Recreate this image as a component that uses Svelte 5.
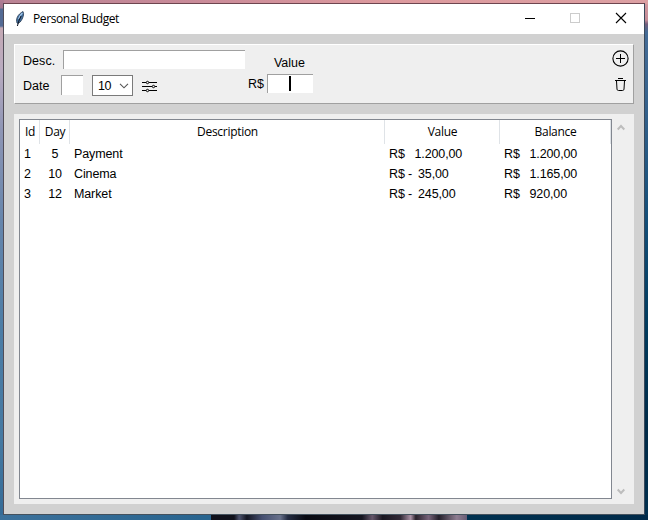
<script>
  const columns = ['Id', 'Day', 'Description', 'Value', 'Balance'];
  const rows = [
    { id: 1, day: 5, desc: 'Payment', sign: '', value: '1.200,00', balance: '1.200,00' },
    { id: 2, day: 10, desc: 'Cinema', sign: '-', value: '35,00', balance: '1.165,00' },
    { id: 3, day: 12, desc: 'Market', sign: '-', value: '245,00', balance: '920,00' }
  ];
</script>

<div class="desktop">
  <div class="wall top"></div>
  <div class="wall left"></div>
  <div class="wall bottom"></div>
  <div class="window">
    <header>
      <svg class="feather" width="12" height="18" viewBox="0 0 12 18">
        <path d="M3 13 C1.6 9 3.5 4.5 9 1.5 C10.4 4 9 8.5 6.2 12 L4 13.4Z" fill="#45719f" stroke="#26374f" stroke-width=".8" />
        <path d="M4.6 9 Q5.8 5.4 8.4 3" fill="none" stroke="#a9cdf0" stroke-width="1.2" />
        <path d="M7.1 6 Q4.7 10 3.4 16" fill="none" stroke="#111827" stroke-width="1.1" />
      </svg>
      <span class="title">Personal Budget</span>
      <svg class="controls" width="120" height="30" viewBox="0 0 120 30" fill="none" shape-rendering="crispEdges">
        <path d="M1 14.5H11" stroke="#000" />
        <rect x="46.5" y="9.5" width="9" height="9" stroke="#ccc" />
        <path d="M92 9L102 19M102 9L92 19" stroke="#000" stroke-width="1.1" shape-rendering="auto" />
      </svg>
    </header>
    <main>
      <section class="form">
        <div class="fields">
          <div class="line first"><span class="label">Desc.</span><div class="entry desc"></div></div>
          <div class="line">
            <span class="label date">Date</span>
            <div class="entry day"></div>
            <div class="combo"><span>10</span>
              <svg width="10" height="6" viewBox="0 0 10 6"><path d="M1 .8L5 4.8L9 .8" fill="none" stroke="#555" stroke-width="1.1" /></svg>
            </div>
            <svg class="sliders" width="16" height="13" viewBox="0 0 16 13" fill="none" stroke="#000">
              <path d="M0 2.5H4M7 2.5H15M0 6.5H10M13 6.5H15M0 10.5H4M7 10.5H15" shape-rendering="crispEdges" />
              <circle cx="5.5" cy="2.5" r="1.2" /><circle cx="11.5" cy="6.5" r="1.2" /><circle cx="5.5" cy="10.5" r="1.2" />
            </svg>
          </div>
        </div>
        <div class="amount">
          <span class="vlabel">Value</span>
          <div class="money"><span>R$</span><div class="entry val"><i></i></div></div>
        </div>
        <div class="actions">
          <svg width="18" height="18" viewBox="0 0 18 18" fill="none" stroke="#000">
            <circle cx="8.5" cy="8.5" r="7.6" stroke-width="1.1" /><path d="M4 8.5H13M8.5 4V13" shape-rendering="crispEdges" />
          </svg>
          <svg width="18" height="14" viewBox="0 0 18 14" fill="none" stroke="#000">
            <path d="M6 .5H11M3 2.5H14" shape-rendering="crispEdges" />
            <path d="M4.5 3L5 11.2Q5.2 12.5 6.5 12.5H10.5Q11.8 12.5 12 11.2L12.5 3" />
          </svg>
        </div>
      </section>
      <section class="list">
        <div class="tree">
          <div class="grid head">
            {#each columns as c}<div>{c}</div>{/each}
          </div>
          {#each rows as r}
            <div class="grid row">
              <div>{r.id}</div>
              <div class="num">{r.day}</div>
              <div>{r.desc}</div>
              <div class="cash"><span class="cur">R$</span><span class="sign">{r.sign}</span><span class:neg={r.sign}>{r.value}</span></div>
              <div class="cash"><span class="cur">R$</span><span class="sign"></span><span>{r.balance}</span></div>
            </div>
          {/each}
        </div>
        <div class="scroll">
          <svg width="8" height="7" viewBox="0 0 8 7"><path d="M.7 5.5L4 2L7.3 5.5" fill="none" stroke="#bdbdbd" stroke-width="2" /></svg>
          <svg width="8" height="7" viewBox="0 0 8 7"><path d="M.7 1.5L4 5L7.3 1.5" fill="none" stroke="#bdbdbd" stroke-width="2" /></svg>
        </div>
      </section>
    </main>
  </div>
  <div class="rock"></div>
</div>

<style>
  :global(body) { margin: 0; overflow: hidden; }
  * { box-sizing: border-box; }
  svg { display: block; flex: none; }
  .desktop {
    position: relative; width: 648px; height: 520px; padding: 3px;
    font: 12.5px/20px "Liberation Sans", Arial, sans-serif; color: #000; white-space: nowrap;
    background: linear-gradient(#d49aa0 0, #c58d98 20px, #755e7c 24px, #456c96 32px, #34618b 110px, #134e78 220px, #003a5c 330px, #002a47 430px, #002f4e 520px);
  }
  .wall { position: absolute; left: 0; top: 0; }
  .wall.top { width: 648px; height: 4px; background: linear-gradient(90deg, #b98394, #c98b99 30%, #dd9a9e 60%, #dca0a3); }
  .wall.left { width: 4px; height: 520px; background: linear-gradient(#b17d94 0, #a1748e 8px, #536a94 9px, #536a94 26px, #c4a9b4 28px, #b9abc0 70px, #8e95b5 130px, #6685ac 220px, #4c7da6 330px, #4579a2 440px, #336a96 520px); }
  .wall.bottom { top: 515px; width: 648px; height: 5px; background: linear-gradient(90deg, #3c719b, #28648f 200px, #28648f 210px, #003150 470px, #002a49); }
  .window { position: relative; width: 642px; height: 512px; border: 1px solid; border-color: #6e454f #39485a #44515d #514d58; background: #d1d1d1; }
  header { display: flex; align-items: flex-start; height: 30px; background: #fff; }
  .feather { margin: 6px 0 0 10px; }
  .title { margin-left: 7px; padding-top: 5px; font: 12px/20px "Open Sans", "Noto Sans", sans-serif; letter-spacing: -.4px; }
  .controls { margin-left: auto; }
  main { display: flex; flex-direction: column; gap: 10px; padding: 10px; }
  section { display: flex; width: 620px; background: #efefef; }
  .form { height: 60px; border: 1px solid; border-color: #fff #a0a0a0 #a0a0a0 #fff; }
  .fields { width: 233px; padding: 5px 0 0 8px; }
  .line { display: flex; align-items: flex-start; height: 25px; }
  .label { width: 40px; line-height: 23px; letter-spacing: .05px; }
  .label.date { width: 38px; }
  .entry { height: 19px; background: #fff; border-top: 1px solid #a0a0a0; border-left: 1px solid #a0a0a0; }
  .desc { width: 182px; }
  .day { width: 22px; height: 20px; }
  .combo { display: flex; align-items: center; justify-content: space-between; width: 41px; height: 21px; margin-left: 9px; padding: 0 3px 0 5px; border: 1px solid #7a7a7a; background: #fff; letter-spacing: -.5px; }
  .sliders { margin: 5px 0 0 9px; }
  .amount { width: 70px; padding-top: 8px; }
  .vlabel { display: block; margin-left: 26px; letter-spacing: -.05px; }
  .money { display: flex; margin-top: 1px; }
  .money span { width: 19px; }
  .val { width: 46px; padding: 1px 0 0 21px; }
  .val i { display: block; width: 2px; height: 15px; background: #000; }
  .actions { display: flex; flex-direction: column; gap: 10px; margin-left: auto; margin-right: 3px; padding-top: 5px; }
  .list { height: 390px; padding: 5px; }
  .tree { width: 593px; height: 380px; border: 1px solid #828790; background: #fff; }
  .grid { display: grid; grid-template-columns: 20px 30px 315px 115px 111px; }
  .head { height: 24px; font: 12px/24px "Open Sans", "Noto Sans", sans-serif; text-align: center; letter-spacing: -.3px; }
  .head > div { padding-left: 1px; border-right: 1px solid #dfe3e7; }
  .row { height: 20px; letter-spacing: -.12px; }
  .row > div { padding-left: 4px; }
  .row > .num { padding-left: 0; text-align: center; }
  .cash { display: flex; }
  .cur { width: 19px; }
  .sign { width: 6.5px; }
  .neg { margin-left: 3.5px; }
  .scroll { display: flex; flex-direction: column; justify-content: space-between; margin-left: 5px; padding: 5px 0 4px; }
  .rock { position: absolute; top: 515px; left: 211px; width: 256px; height: 5px; background: linear-gradient(90deg, #10111b 0 9%, #4c526d 11%, #141622 14%, #454f70 20%, #68718b 27%, #242c42 30%, #090a12 37%, #151520 59%, #65566a 63%, #191620 67%, #312936 74%, #a990a4 78%, #29212b 80%, #77637a 85%, #24202b 89%, #8e7d91 96%, #685c75 100%); }
</style>
